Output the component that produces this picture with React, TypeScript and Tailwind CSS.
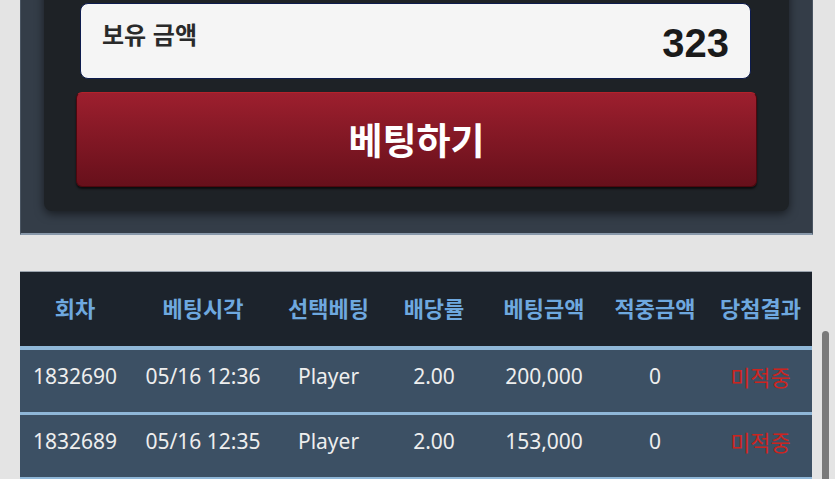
import React from 'react';

interface Bet {
  round: string;
  time: string;
  pick: string;
  odds: string;
  amount: string;
  win: string;
  result: string;
}

const bets: Bet[] = [
  { round: '1832690', time: '05/16 12:36', pick: 'Player', odds: '2.00', amount: '200,000', win: '0', result: '미적중' },
  { round: '1832689', time: '05/16 12:35', pick: 'Player', odds: '2.00', amount: '153,000', win: '0', result: '미적중' },
];

const headers = ['회차', '베팅시각', '선택베팅', '배당률', '베팅금액', '적중금액', '당첨결과'];

const cols = 'grid grid-cols-[110px_146px_105px_106px_114px_108px_103px]';

export default function App() {
  return (
    <div className="relative h-[479px] overflow-hidden bg-[#e4e4e4] font-['Noto_Sans','Noto_Sans_CJK_KR',sans-serif]">
      {/* balance + bet button panel (scrolled, top cut off) */}
      <div className="ml-[20px] -mt-[60px] w-[793px] border-x border-b-2 border-x-[#4a5562] border-b-[#8898aa] bg-[#343d48] px-[23px] pt-[20px] pb-[22px]">
        <div className="rounded-lg bg-[#1e2226] px-[32px] pt-[43px] pb-[24px] shadow-[0_3px_10px_rgba(0,0,0,0.55)]">
          <div className="ml-[4px] mr-[6px] flex h-[76px] items-start justify-between rounded-lg border border-[#0d1b4d] bg-[#f5f5f5] px-[21px] pt-[20px] font-['Liberation_Sans','Noto_Sans_CJK_KR',sans-serif]">
            <span className="text-[24px] font-bold leading-none text-[#2a2a2a]">보유 금액</span>
            <span className="-mt-[1px] text-[40px] font-bold leading-none text-[#1a1a1a]">323</span>
          </div>
          <button className="mt-[13px] flex h-[95px] w-full items-center justify-center rounded-md border border-[#4d080e] border-t-[#b3232b] bg-gradient-to-b from-[#9d1f2e] to-[#67101b] font-['Noto_Sans_CJK_KR',sans-serif] text-[37px] font-bold text-white shadow-[0_2px_2px_rgba(0,0,0,0.6)]">
            베팅하기
          </button>
        </div>
      </div>

      {/* bet history */}
      <div className="mt-[36px] ml-[20px] w-[792px] border-t border-[#9aa3ad]">
        <div className={`${cols} h-[74px] items-center bg-[#1c232c] pb-[4px] font-['Noto_Sans_CJK_KR',sans-serif] text-[22px] font-semibold text-[#6ea8df]`}>
          {headers.map(h => (
            <div key={h} className="text-center">{h}</div>
          ))}
        </div>
        <div className="h-[4px] bg-[#8fb7d8]" />
        {bets.map(b => (
          <div key={b.round}>
            <div className={`${cols} h-[62px] items-center bg-[#3c5064] pb-[8px] text-[21px] text-[#eeeeee]`}>
              <div className="text-center">{b.round}</div>
              <div className="text-center">{b.time}</div>
              <div className="text-center">{b.pick}</div>
              <div className="text-center">{b.odds}</div>
              <div className="text-center">{b.amount}</div>
              <div className="text-center">{b.win}</div>
              <div className="text-center text-[22px] text-[#cc2420]">{b.result}</div>
            </div>
            <div className="h-[3px] bg-[#8fb7d8]" />
          </div>
        ))}
      </div>

      {/* scrollbar thumb */}
      <div className="absolute top-[331px] left-[822px] h-[200px] w-[7px] rounded-full bg-[#7a7a7a]" />
    </div>
  );
}
